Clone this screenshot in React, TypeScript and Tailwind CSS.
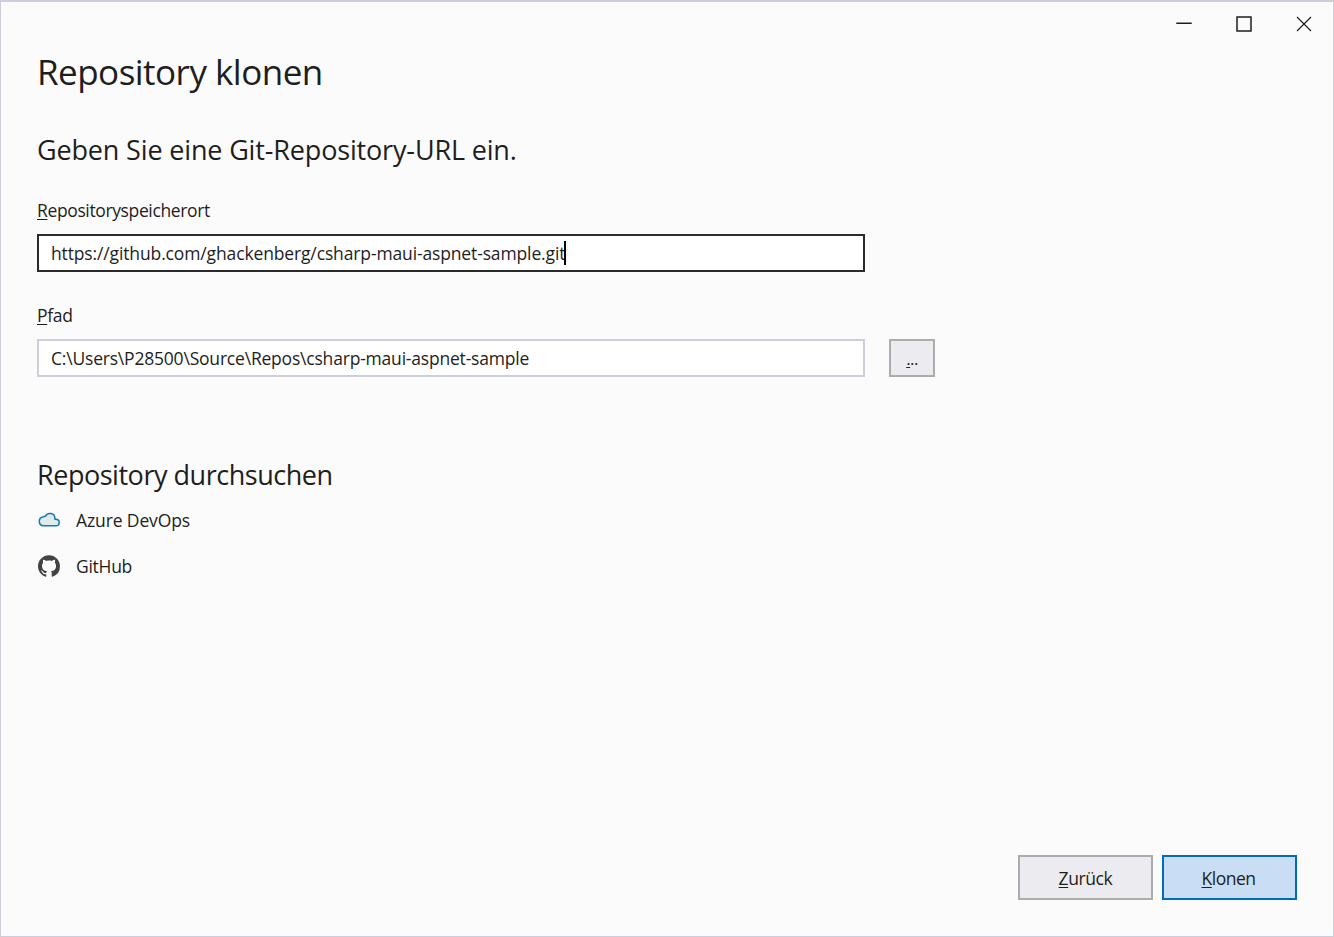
import type { ReactNode } from "react";

function Key({ children }: { children: ReactNode }) {
  return (
    <span className="underline decoration-1 underline-offset-[2px] [text-decoration-skip-ink:none]">
      {children}
    </span>
  );
}

function TitleBar() {
  return (
    <div className="-mr-px flex h-11 shrink-0 justify-end text-[#1e1e1e]">
      <button className="flex h-11 w-[60px] items-center justify-center" aria-label="Minimieren">
        <svg width="16" height="16" viewBox="0 0 16 16" fill="none" stroke="currentColor" strokeWidth="1.5">
          <path d="M0.3 7.25h15.4" />
        </svg>
      </button>
      <button className="flex h-11 w-[60px] items-center justify-center" aria-label="Maximieren">
        <svg width="16" height="16" viewBox="0 0 16 16" fill="none" stroke="currentColor" strokeWidth="1.5">
          <rect x="1" y="1" width="14" height="14" />
        </svg>
      </button>
      <button className="flex h-11 w-[60px] items-center justify-center" aria-label="Schließen">
        <svg width="16" height="16" viewBox="0 0 16 16" fill="none" stroke="currentColor" strokeWidth="1.2">
          <path d="M1 1l14 14M15 1l-14 14" />
        </svg>
      </button>
    </div>
  );
}

export default function App() {
  return (
    <div className="flex h-[937px] w-[1334px] flex-col border border-t-2 border-[#cccedb] bg-[#fbfbfb] font-['Open_Sans','Noto_Sans',sans-serif] text-[17.5px] leading-6 text-[#1e1e1e]">
      <TitleBar />
      <main className="flex flex-1 flex-col px-9 pb-9">
        <h1 className="mt-0.5 h-12 whitespace-nowrap text-[35px] leading-[48px] tracking-[-0.52px]">Repository klonen</h1>
        <h2 className="mt-9 h-9 whitespace-nowrap text-[27px] leading-9 tracking-[-0.16px]">
          Geben Sie eine Git-Repository-URL ein.
        </h2>
        <label className="mt-[30px] h-6 whitespace-nowrap tracking-[-0.37px]">
          <Key>R</Key>epositoryspeicherort
        </label>
        <div className="mt-3 flex h-[38px] w-[828px] items-center border-2 border-[#2b2b2e] bg-white pl-3">
          <span className="whitespace-nowrap tracking-[-0.135px]">https://github.com/ghackenberg/csharp-maui-aspnet-sample.git</span>
          <span className="-ml-[1.5px] h-6 w-0.5 bg-black" />
        </div>
        <label className="mt-[31px] h-6 whitespace-nowrap tracking-[-0.3px]">
          <Key>P</Key>fad
        </label>
        <div className="mt-3 flex gap-6">
          <div className="flex h-[38px] w-[828px] items-center border-2 border-[#cccedb] bg-white pl-3">
            <span className="whitespace-nowrap tracking-[-0.2px]">C:\Users\P28500\Source\Repos\csharp-maui-aspnet-sample</span>
          </div>
          <button className="flex h-[38px] w-[46px] items-center justify-center border-2 border-[#acacac] bg-[#ececf0] text-[17px] tracking-[-0.6px]">
            <span className="pt-px"><Key>.</Key>..</span>
          </button>
        </div>
        <h2 className="mt-20 h-9 whitespace-nowrap text-[27px] leading-9 tracking-[-0.47px]">Repository durchsuchen</h2>
        <div className="mt-[15px] flex h-6 items-center gap-[15px]">
          <svg className="-mt-0.5" width="24" height="24" viewBox="0 0 24 24" fill="#e0ebf0" stroke="#0f7fae" strokeWidth="1.5" strokeLinejoin="round">
            <path d="M6.500 18.800A4.500 4.500 0 0 1 5.900 9.900C6.800 9.200 7.900 9.100 8.600 9.200A4.900 4.900 0 0 1 17.900 11.300v.9h1a3.300 3.300 0 0 1 0 6.600z" />
          </svg>
          <span className="whitespace-nowrap tracking-[-0.12px]">Azure DevOps</span>
        </div>
        <div className="mt-[22px] flex h-6 items-center gap-[15px]">
          <svg width="24" height="24" viewBox="0 0 24 24" fill="#424242">
            <path
              transform="translate(1 1.3) scale(1.375)"
              d="M8 0C3.58 0 0 3.58 0 8c0 3.54 2.29 6.53 5.470 7.590.4.070.55-.17.55-.38 0-.19-.01-.82-.01-1.490-2.010.37-2.530-.49-2.690-.94-.09-.23-.48-.94-.82-1.130-.28-.15-.68-.52-.01-.53.63-.01 1.080.58 1.230.82.72 1.210 1.870.87 2.330.66.07-.52.28-.87.51-1.070-1.780-.2-3.640-.89-3.640-3.950 0-.87.31-1.590.82-2.150-.08-.2-.36-1.020.08-2.120 0 0 .67-.21 2.200.82.64-.18 1.320-.27 2-.27s1.360.09 2 .27c1.530-1.040 2.200-.82 2.200-.82.44 1.100.16 1.920.08 2.120.51.56.82 1.270.82 2.150 0 3.070-1.870 3.750-3.650 3.950.29.25.54.73.54 1.480 0 1.070-.01 1.930-.01 2.200 0 .21.15.46.55.38A8.010 8.010 0 0 0 16 8c0-4.420-3.580-8-8-8z"
            />
          </svg>
          <span className="whitespace-nowrap tracking-[-0.28px]">GitHub</span>
        </div>
        <div className="mt-auto flex justify-end gap-[9px]">
          <button className="h-[45px] w-[135px] border-2 border-[#acacac] bg-[#ececf0] tracking-[-0.4px]">
            <Key>Z</Key>urück
          </button>
          <button className="h-[45px] w-[135px] border-2 border-[#006cbe] bg-[#c9def5] pr-2 pl-1.5 tracking-[-0.5px]">
            <Key>K</Key>lonen
          </button>
        </div>
      </main>
    </div>
  );
}
